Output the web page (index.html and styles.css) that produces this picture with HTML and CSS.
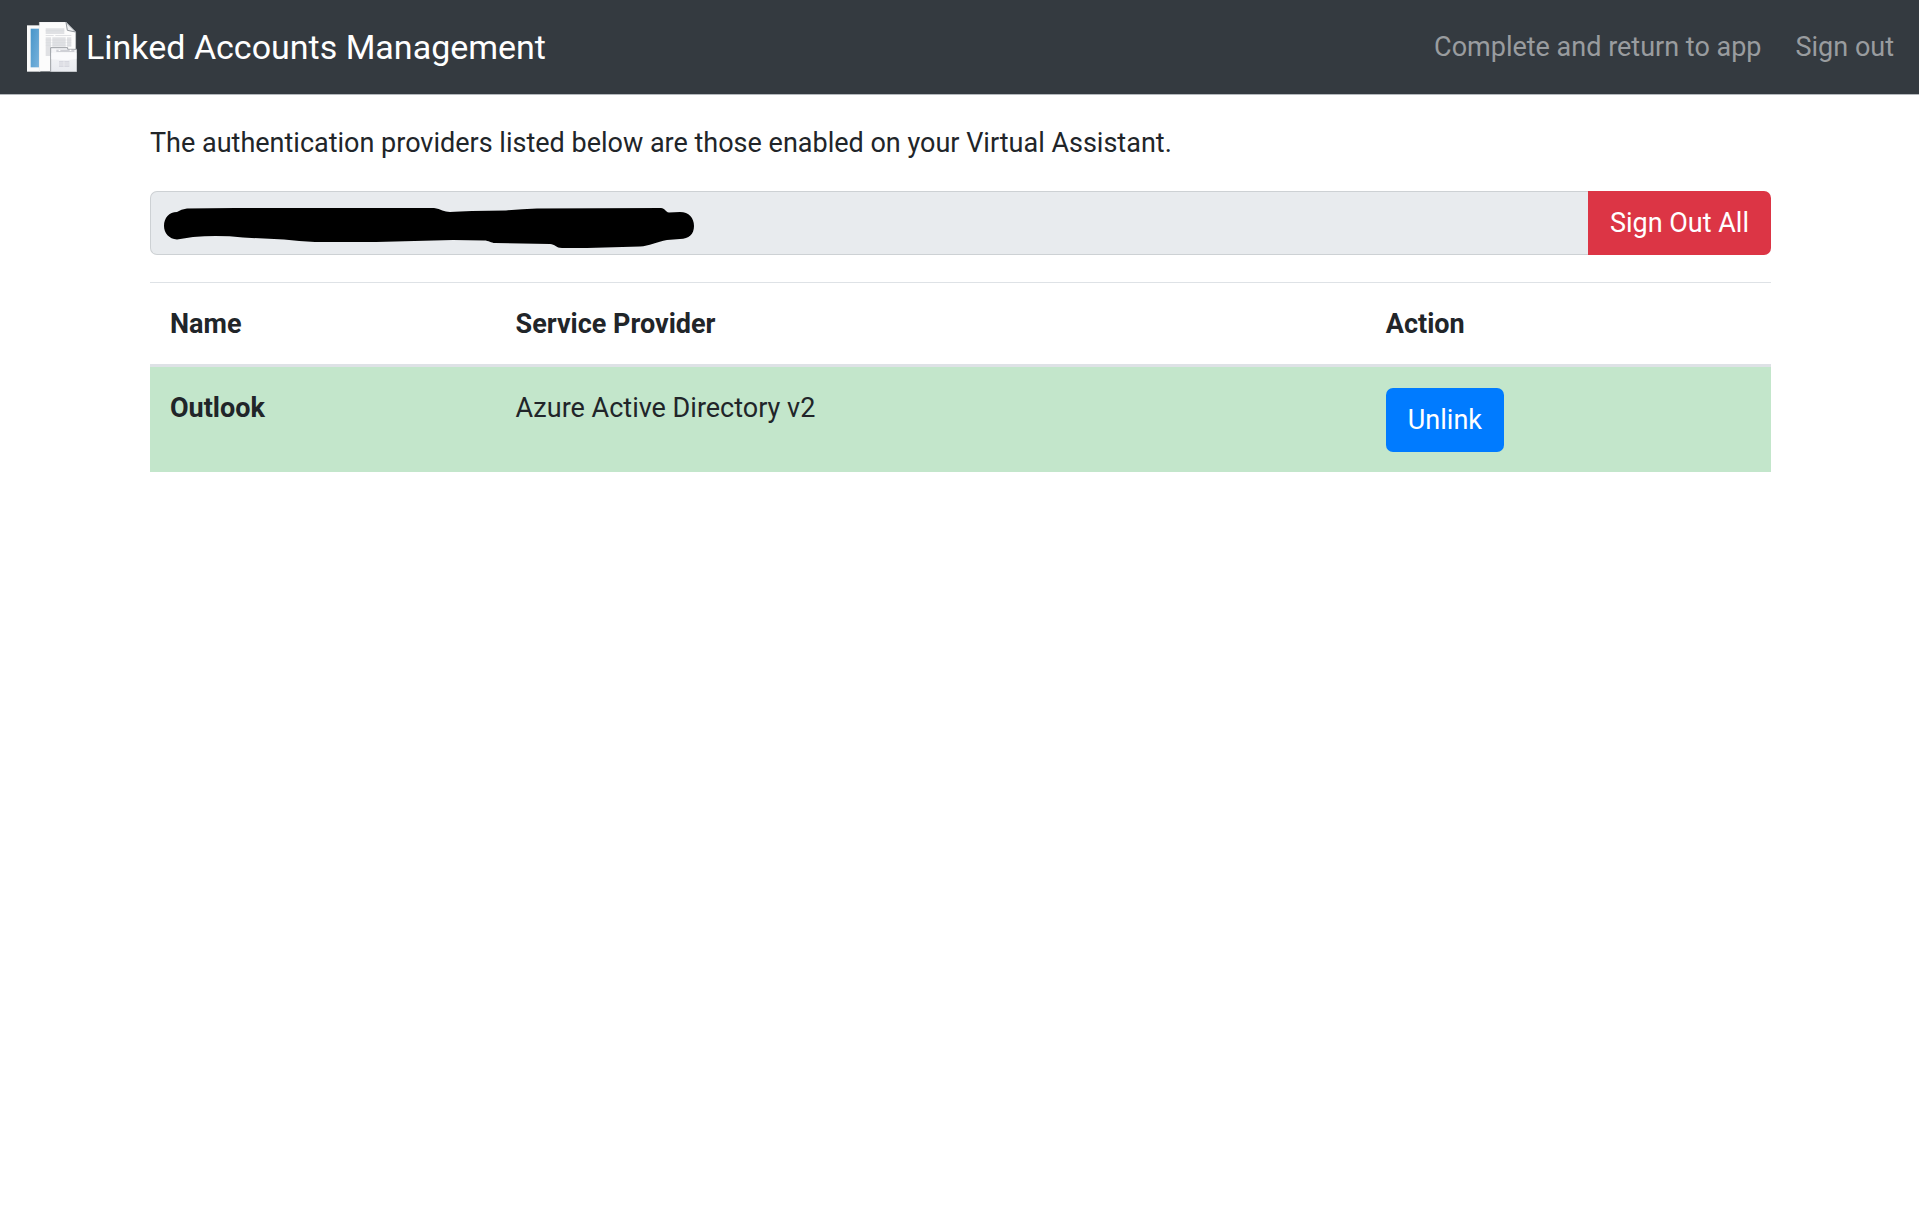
FILE: index.html
```html
<!DOCTYPE html>
<html lang="en">
<head>
<meta charset="utf-8">
<title>Linked Accounts Management</title>
<link rel="stylesheet" href="styles.css">
</head>
<body>
<header class="navbar">
  <a class="brand" href="#">
    <svg class="brand-icon" viewBox="21 24 150 150" aria-hidden="true">
      <defs>
        <linearGradient id="blue" x1="0" y1="0" x2="1" y2="1">
          <stop offset="0" stop-color="#4795c9"/><stop offset="1" stop-color="#78b2dc"/>
        </linearGradient>
        <linearGradient id="paper" x1="0" y1="0" x2="0" y2="1">
          <stop offset="0" stop-color="#f6f6f8"/><stop offset="1" stop-color="#e9ebf0"/>
        </linearGradient>
      </defs>
      <path fill="#fafafa" d="M21 34h40v139H21z"/>
      <path fill="url(#blue)" d="M32 44h25v116H32z"/>
      <path fill="#fcfcfc" stroke="#d5d8dc" d="M58 24h80l29 30v118H58z"/>
      <path fill="#e0e1e4" d="M77 43h56v17H77zM77 63h24v3H77zM106 63h48v3h-48zM77 70h16v56H77zM97 70h40v28H97zM141 70h13v28h-13z"/>
      <path stroke="#cfd1d5" stroke-width="1" d="M77 78h77M77 86h77M77 94h77M77 50h56"/>
      <path fill="#eeeff1" stroke="#92979d" stroke-width="3" d="M138 25l4 24 25 5z"/>
      <path fill="url(#paper)" stroke="#9b9ea3" stroke-width="3" d="M92 101h51v5h28v68H92z"/>
      <path fill="#cfd0d6" d="M109 107h54v7h-54z"/>
      <path fill="#fff" d="M116 107h5v4h-5zM149 107h5v4h-5z"/>
      <path fill="#fafafc" d="M94 116h75v18l-28 5-47-3z"/>
      <path fill="#d6d7df" d="M117 141h31v18h-31z"/>
      <path stroke="#f2f2f5" stroke-width="2" d="M117 147h31M117 153h31M132 141v18"/>
    </svg>
    <span>Linked Accounts Management</span>
  </a>
  <nav class="nav-links">
    <a href="#">Complete and return to app</a>
    <a href="#">Sign out</a>
  </nav>
</header>
<main class="container">
  <p class="intro">The authentication providers listed below are those enabled on your Virtual Assistant.</p>
  <form class="input-group">
    <div class="user-field">
      <input class="form-control" type="text" aria-label="Signed-in user" readonly>
      <svg class="redaction" viewBox="0 0 560 64" aria-hidden="true">
        <path d="M27 21Q31 18 37 17.500L85 17H284C291 18 294 21 300 21C306 21 314 20 322 20L356 19.500Q371 18 387 17.500L511 17C515 17 515 21 519 21.500L530 21C539 21 544 27 544 35C544 43 539 48 530 48L517 49C507 51 499 55 490 55.500L437 57H412C406 57 405 53 400 53L345 52C341 52 339 49.500 334 49.500Q318 49 303 49L226 51H165Q149 50 134 48.500L93 46.500Q69 44 43 46L27 48.500C19 48 14 42 14 35C14 27 19 21 27 21Z"/>
      </svg>
    </div>
    <button class="btn btn-danger" type="button">Sign Out All</button>
  </form>
  <table class="table">
    <thead>
      <tr><th scope="col">Name</th><th scope="col">Service Provider</th><th scope="col">Action</th></tr>
    </thead>
    <tbody>
      <tr class="linked">
        <th scope="row">Outlook</th>
        <td>Azure Active Directory v2</td>
        <td><button class="btn btn-primary" type="button">Unlink</button></td>
      </tr>
    </tbody>
  </table>
</main>
</body>
</html>
```
FILE: styles.css
```css
*, *::before, *::after { box-sizing: border-box; }

body {
  margin: 0;
  background: #fff;
  color: #212529;
  font-family: Roboto, "Liberation Sans", sans-serif;
  font-size: 27px;
  line-height: 40px;
}

.navbar {
  display: flex;
  align-items: center;
  justify-content: space-between;
  padding: 14px 25px 14px 27px;
  background: #343a40;
  border-bottom: 1px solid #b4b8bc;
}

.brand {
  display: flex;
  align-items: center;
  gap: 9px;
  padding: 8px 0;
  color: #fff;
  font-size: 34px;
  line-height: 50px;
  text-decoration: none;
}

.brand-icon { width: 50px; height: 50px; }

.nav-links { display: flex; gap: 34px; }

.nav-links a {
  color: #999c9f;
  text-decoration: none;
}

.container { padding: 0 148px 0 150px; }

.intro { margin: 28px 0; }

.input-group { display: flex; margin-bottom: 27px; }

.user-field { position: relative; flex: 1; }

.form-control {
  display: block;
  width: 100%;
  height: 64px;
  padding: 10px 20px;
  border: 1px solid #cdd1d4;
  border-right: 0;
  border-radius: 7px 0 0 7px;
  background: #e8ebee;
  color: #495057;
  font: inherit;
}

.redaction {
  position: absolute;
  top: 0;
  left: 0;
  width: 560px;
  height: 64px;
}

.btn {
  padding: 11px 21px;
  border: 1px solid transparent;
  border-radius: 7px;
  color: #fff;
  font: inherit;
  cursor: pointer;
}

.btn-danger { background: #dc3545; border-radius: 0 7px 7px 0; }

.btn-primary { display: block; background: #007bff; }

.table { width: 100%; border-collapse: collapse; }

.table th, .table td {
  padding: 21px 20px 20px;
  border-top: 1px solid #dee2e6;
  text-align: left;
  vertical-align: top;
}

.table th { font-weight: 700; }

.table thead th { border-bottom: 3px solid #dee2e6; }

.linked { background: #c3e6cb; }
```
